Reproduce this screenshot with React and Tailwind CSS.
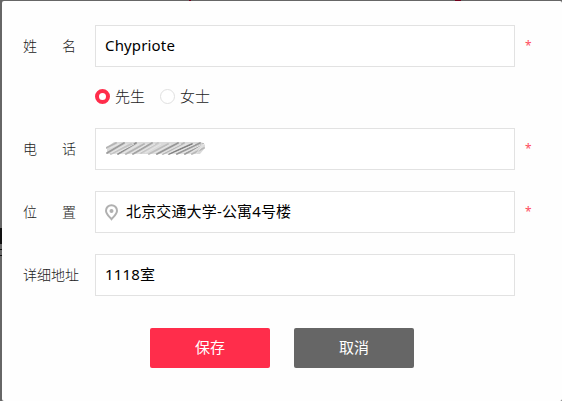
const labelBox = 'flex w-[72px] shrink-0 text-sm leading-5 font-light text-[#222]';
const inputBox =
  'flex h-[42px] w-[420px] shrink-0 items-center border border-[#e2e2e2] bg-white pb-[2px] pl-[9px] text-[15px] leading-5 tracking-[0.15px] text-black';

const strokes = [
  [0, 8, 10, 3, '#b4b4b4'], [1, 13, 18, 3, '#9c9c9c'], [5, 14, 25, 4, '#c4c4c4'],
  [12, 14, 30, 3, '#909090'], [20, 14, 38, 4, '#b4b4b4'], [27, 14, 46, 3, '#a3a3a3'],
  [35, 13, 52, 3, '#c6c6c6'], [43, 14, 62, 4, '#bdbdbd'], [51, 14, 72, 3, '#969696'],
  [57, 14, 78, 3, '#b4b4b4'], [63, 14, 86, 4, '#828282'], [71, 14, 94, 3, '#989898'],
  [79, 14, 97, 4, '#9c9c9c'], [86, 14, 98, 8, '#b8b8b8'],
];

function Label({ text }) {
  return (
    <div className={labelBox}>
      {text.length === 2 ? (
        <div className="flex w-[53px] justify-between">
          <span>{text[0]}</span>
          <span>{text[1]}</span>
        </div>
      ) : (
        <span className="whitespace-nowrap">{text}</span>
      )}
    </div>
  );
}

function Field({ label, required, children }) {
  return (
    <div className="flex items-center">
      <Label text={label} />
      <div className={inputBox}>{children}</div>
      {required && <span className="ml-[10px] text-xs leading-5 text-[#ff4d5e]">*</span>}
    </div>
  );
}

function MaskedPhone() {
  return (
    <svg width="101" height="17" viewBox="0 0 101 17" className="ml-px blur-[0.5px]" aria-hidden="true">
      <path d="M1 7 L8 2 H93 Q100 2 99 8 L94 14 H1 Z" fill="#dadada" />
      {strokes.map(([x1, y1, x2, y2, color]) => (
        <line key={x1} x1={x1} y1={y1} x2={x2} y2={y2} stroke={color} strokeWidth="1.8" strokeLinecap="round" />
      ))}
      {strokes.map(([x1, y1, x2]) => (
        <line key={x1} x1={x1 + 4} y1={y1} x2={Math.min(x2 + 3, 98)} y2="4" stroke="#e6e6e6" strokeWidth="1" />
      ))}
    </svg>
  );
}

function Pin() {
  return (
    <svg width="14" height="17" viewBox="0 0 14 17" fill="none" className="mr-[7px] shrink-0 translate-y-px" aria-hidden="true">
      <path d="M6.5 15.2 C4.8 13 1 10.2 1 6.7 A5.5 5.5 0 0 1 12 6.7 C12 10.2 8.2 13 6.5 15.2 Z" stroke="#b0b0b0" strokeWidth="2" />
      <circle cx="6.5" cy="7" r="2" fill="#b0b0b0" />
    </svg>
  );
}

export default function App() {
  return (
    <div className="relative h-[401px] w-[562px] overflow-hidden bg-[#666] pl-[2px] pt-px font-['Noto_Sans','Noto_Sans_CJK_SC',sans-serif]">
      {/* Slivers of the dimmed page behind the dialog */}
      <span className="absolute left-[455px] top-0 h-px w-[6px] bg-[#70001c]" />
      <span className="absolute left-[189px] top-0 h-px w-[2px] bg-[#70001c]" />
      <span className="absolute left-0 top-[228px] h-4 w-[2px] bg-[#111]" />
      <span className="absolute left-0 top-[249px] h-px w-[2px] bg-[#111]" />
      <span className="absolute left-0 top-[255px] h-px w-[2px] bg-[#111]" />

      <div className="flex h-[400px] w-[560px] flex-col rounded-[2px] bg-[#fefefe] pl-[21px] pt-6">
        <Field label="姓名" required>Chypriote</Field>

        <div className="flex h-[61px] items-center pb-[3px] pl-[72px] text-[15px] leading-5 font-light text-[#222]">
          <span className="size-[15px] rounded-full border-[4.5px] border-[#ff2d4b] bg-white" />
          <span className="ml-[5px] w-[45px]">先生</span>
          <span className="size-[15px] rounded-full border border-[#e0e0e0] bg-white" />
          <span className="ml-[5px]">女士</span>
        </div>

        <div className="flex flex-col gap-[21px]">
          <Field label="电话" required><MaskedPhone /></Field>
          <Field label="位置" required>
            <Pin />
            北京交通大学-公寓4号楼
          </Field>
          <Field label="详细地址">1118室</Field>
        </div>

        <div className="mt-8 flex gap-6 pl-[127px] text-[15px] leading-5 text-white">
          <button className="h-10 w-[120px] rounded-[2px] bg-[#ff2d4b] pb-[2px]">保存</button>
          <button className="h-10 w-[120px] rounded-[2px] bg-[#666] pb-[2px]">取消</button>
        </div>
      </div>
    </div>
  );
}
